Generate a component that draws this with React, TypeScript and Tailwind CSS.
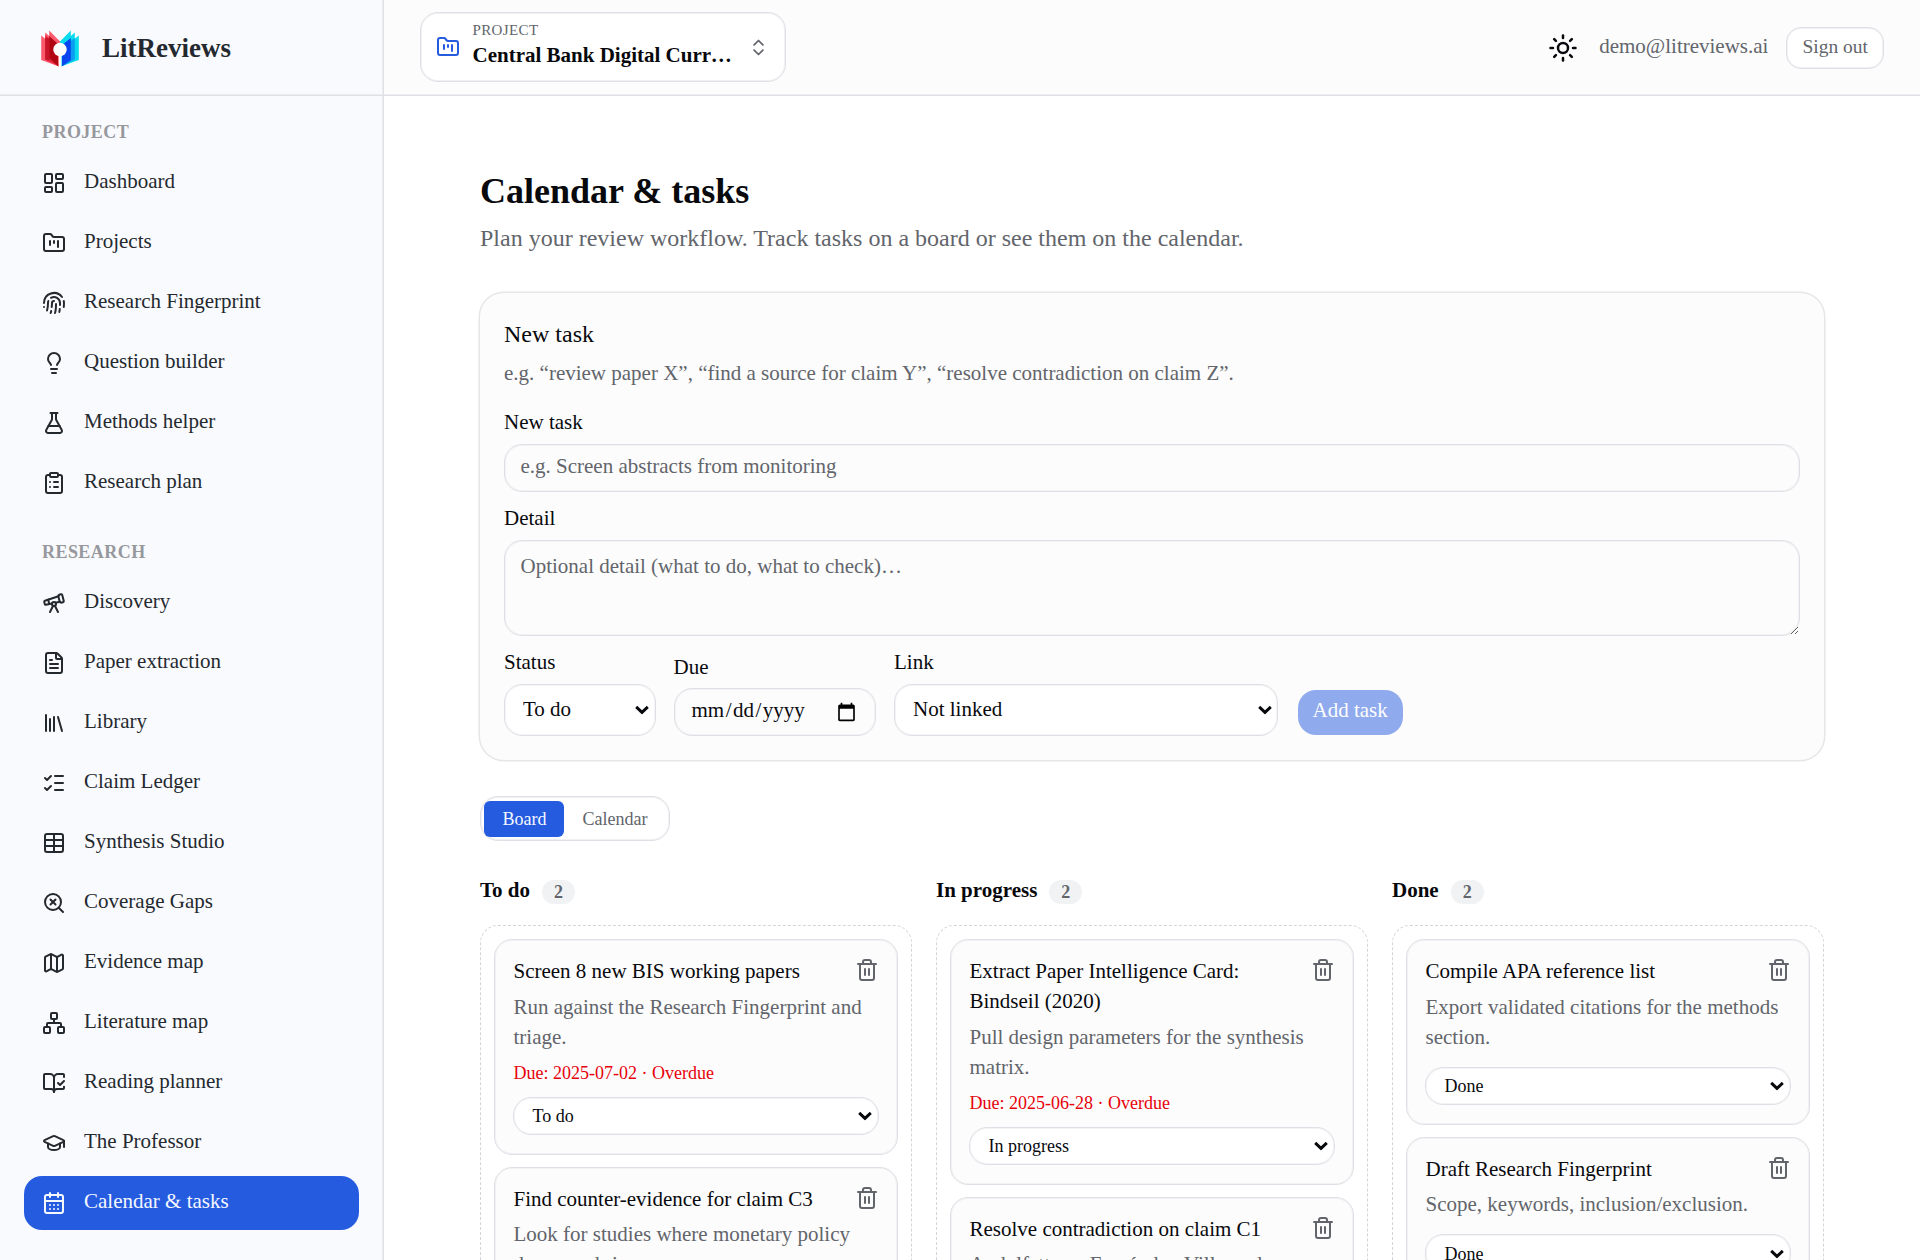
import React from "react";
import {
  LayoutDashboard, FolderKanban, FingerprintPattern, Lightbulb, FlaskConical, ClipboardList, Telescope, FileText,
  Library, ListChecks, SearchX, Map as MapIcon, Network, BookOpenCheck, GraduationCap,
  CalendarDays, ChevronsUpDown, Sun, Trash2, Table,
} from "lucide-react";

type Item = { label: string; icon: React.ElementType; active?: boolean };

const projectNav: Item[] = [
  { label: "Dashboard", icon: LayoutDashboard },
  { label: "Projects", icon: FolderKanban },
  { label: "Research Fingerprint", icon: FingerprintPattern },
  { label: "Question builder", icon: Lightbulb },
  { label: "Methods helper", icon: FlaskConical },
  { label: "Research plan", icon: ClipboardList },
];

const researchNav: Item[] = [
  { label: "Discovery", icon: Telescope },
  { label: "Paper extraction", icon: FileText },
  { label: "Library", icon: Library },
  { label: "Claim Ledger", icon: ListChecks },
  { label: "Synthesis Studio", icon: Table },
  { label: "Coverage Gaps", icon: SearchX },
  { label: "Evidence map", icon: MapIcon },
  { label: "Literature map", icon: Network },
  { label: "Reading planner", icon: BookOpenCheck },
  { label: "The Professor", icon: GraduationCap },
  { label: "Calendar & tasks", icon: CalendarDays, active: true },
];

type Task = { title: string; detail: string; due?: string; status: string };

const columns: { name: string; tasks: Task[] }[] = [
  {
    name: "To do",
    tasks: [
      { title: "Screen 8 new BIS working papers", detail: "Run against the Research Fingerprint and triage.", due: "2025-07-02", status: "To do" },
      { title: "Find counter-evidence for claim C3", detail: "Look for studies where monetary policy dampened rises.", status: "To do" },
    ],
  },
  {
    name: "In progress",
    tasks: [
      { title: "Extract Paper Intelligence Card: Bindseil (2020)", detail: "Pull design parameters for the synthesis matrix.", due: "2025-06-28", status: "In progress" },
      { title: "Resolve contradiction on claim C1", detail: "Andolfatto vs Fernández-Villaverde.", status: "In progress" },
    ],
  },
  {
    name: "Done",
    tasks: [
      { title: "Compile APA reference list", detail: "Export validated citations for the methods section.", status: "Done" },
      { title: "Draft Research Fingerprint", detail: "Scope, keywords, inclusion/exclusion.", status: "Done" },
    ],
  },
];

function Logo() {
  return (
    <svg viewBox="0 0 48 48" className="size-8">
      <path d="M5.200 11.500L9.200 14.800V8.500L13.200 12V6.500L24 17.500V30L23 42.500L5.200 36z" fill="#fb5a6c" />
      <path d="M9.200 11L20 21L23 42.500L9.200 35.500z" fill="#e3263d" />
      <path d="M13.200 12L22 20V42L13.200 34z" fill="#b00713" />
      <path d="M9.200 14V35.500L13.200 37V14z" fill="#c9152a" />
      <path d="M42.800 11.500L38.800 14.800V8.500L34.800 12V6.500L24 17.500V30L25 42.500L42.800 36z" fill="#08dcec" />
      <path d="M38.800 14L28 22L25.500 42.500L38.800 35.500z" fill="#0a9cf0" />
      <path d="M34.800 14L26 21V42.300L34.800 36z" fill="#0a46f0" />
      <path d="M22.700 28h2.800v15h-2.800z" fill="#f9fafd" />
      <circle cx="24" cy="25.500" r="6.700" fill="#fff" />
    </svg>
  );
}

function NavGroup({ title, items }: { title: string; items: Item[] }) {
  return (
    <div className="mb-5">
      <div className="mb-2 px-3 text-xs font-semibold tracking-wide text-[#96989e] uppercase">{title}</div>
      <div className="flex flex-col gap-1">
        {items.map(({ label, icon: Icon, active }) => (
          <a
            key={label}
            className={
              active
                ? "flex items-center gap-3 rounded-xl bg-[#255bdf] px-3 py-2 text-sm text-[#f5f8ff]"
                : "flex items-center gap-3 rounded-xl px-3 py-2 text-sm text-[#24292f]"
            }
          >
            <Icon className="size-4 shrink-0" />
            <span className="-mt-[1.67px] mb-[1.67px]">{label}</span>
          </a>
        ))}
      </div>
    </div>
  );
}

function Select({ value, className, selectClass }: { value: string; className: string; selectClass: string }) {
  return (
    <div className={`relative ${className}`}>
      <select
        className={`block w-full appearance-none rounded-xl border border-[#dfe0e5] bg-white pl-[12px] shadow-[inset_0_0_0_0.67px_#f4f4f6] ${selectClass}`}
      >
        <option>{value}</option>
      </select>
      <svg viewBox="0 0 14 9" className="pointer-events-none absolute top-1/2 right-[4.33px] h-[6px] w-[9.33px] -translate-y-1/2">
        <path d="M1.200 1.400L7 6.900L12.800 1.400" fill="none" stroke="#08090d" strokeWidth="2.900" />
      </svg>
    </div>
  );
}

function TaskCard({ task }: { task: Task }) {
  return (
    <div className="rounded-xl border border-[#dfe0e5] bg-[#fcfcfc] p-[12.33px] pt-3 shadow-[inset_0_0_0_0.67px_#f2f2f4]">
      <div className="flex items-start justify-between gap-2">
        <p className="-mt-[1.33px] mb-[1.33px] text-sm">{task.title}</p>
        <button className="shrink-0 text-[#62656b]">
          <Trash2 className="size-4" />
        </button>
      </div>
      <p className="mt-[2.33px] text-sm text-[#62656b]">{task.detail}</p>
      {task.due && <p className="mt-[6px] text-xs text-[#e7000b]">Due: {task.due} · Overdue</p>}
      <Select value={task.status} className={task.due ? "mt-[8px]" : "mt-[10px]"} selectClass="h-[25.67px] text-xs" />
    </div>
  );
}

export default function App() {
  return (
    <div className="flex h-[840px] w-[1280px] overflow-hidden bg-white font-['Liberation_Serif',serif] text-[#08090d] [zoom:1.5]">
      <aside className="flex w-64 shrink-0 flex-col border-r border-[#dfe0e5] bg-[#f9fafd] shadow-[inset_-0.67px_0_0_#ebecf0]">
        <div className="flex h-16 shrink-0 items-center gap-3 border-b border-[#dfe0e5] px-6 shadow-[inset_0_-0.67px_0_#ebecf0]">
          <Logo />
          <span className="text-lg font-bold text-[#24292f]">LitReviews</span>
        </div>
        <nav className="py-4 pr-[16.33px] pl-4">
          <NavGroup title="Project" items={projectNav} />
          <NavGroup title="Research" items={researchNav} />
        </nav>
      </aside>
      <div className="flex min-w-0 flex-1 flex-col">
        <header className="flex h-16 shrink-0 items-center justify-between border-b border-[#dfe0e5] bg-[#fcfcfc] px-6 shadow-[inset_0_-0.67px_0_#eeeff2]">
          <button className="mb-[0.67px] flex h-[46.67px] items-center gap-2 rounded-xl border border-[#dfe0e5] bg-white px-[10.33px] text-left shadow-[inset_0_0_0_0.67px_#f1f1f4]">
            <FolderKanban className="size-4 shrink-0 text-[#255bdf]" />
            <span className="-mt-[2.67px] flex w-44 flex-col">
              <span className="mt-[0.67px] -mb-[0.67px] text-[10px] leading-[13px] tracking-wide text-[#62656b] uppercase">Project</span>
              <span className="truncate text-sm font-semibold">Central Bank Digital Currency adoption</span>
            </span>
            <ChevronsUpDown className="size-3.5 shrink-0 text-[#62656b]" />
          </button>
          <div className="flex items-center gap-3">
            <Sun className="mr-0.5 size-5" />
            <span className="-mt-px mb-px text-sm text-[#62656b]">demo@litreviews.ai</span>
            <button className="h-7 rounded-[10px] border border-[#dfe0e5] bg-white px-2.5 pb-px text-[13px] text-[#62656b] shadow-[inset_0_0_0_0.67px_#f1f1f4]">
              Sign out
            </button>
          </div>
        </header>
        <main className="flex-1 overflow-hidden px-16 py-12">
          <h1 className="-mt-[0.67px] mb-[0.67px] text-2xl font-bold">Calendar &amp; tasks</h1>
          <p className="mt-[3px] text-base text-[#62656b]">
            Plan your review workflow. Track tasks on a board or see them on the calendar.
          </p>
          <section className="mt-[25.33px] rounded-2xl bg-[#fcfcfc] p-4 ring-1 ring-[#e6e6e7]">
            <h2 className="-mt-px text-base">New task</h2>
            <p className="mt-1 text-sm text-[#62656b]">
              e.g. “review paper X”, “find a source for claim Y”, “resolve contradiction on claim Z”.
            </p>
            <div className="mt-[17.33px] flex flex-col gap-3">
              <div className="flex flex-col gap-1.5">
                <label className="-mt-px mb-px text-sm leading-none">New task</label>
                <input
                  placeholder="e.g. Screen abstracts from monitoring"
                  className="h-8 w-full rounded-xl border border-[#dfe0e5] px-[10.33px] pt-[3px] pb-[5px] text-sm shadow-[inset_0_0_0_0.67px_#f2f2f4] placeholder:text-[#62656b]"
                />
              </div>
              <div className="flex flex-col gap-1.5">
                <label className="-mt-px mb-px text-sm leading-none">Detail</label>
                <textarea
                  placeholder="Optional detail (what to do, what to check)…"
                  className="block h-16 w-full rounded-xl border border-[#dfe0e5] px-[10.33px] pt-[7px] pb-2 text-sm shadow-[inset_0_0_0_0.67px_#f2f2f4] placeholder:text-[#62656b]"
                />
              </div>
              <div className="flex items-end gap-3">
                <div className="flex flex-col gap-1.5">
                  <label className="-mt-px mb-px text-sm leading-none">Status</label>
                  <Select value="To do" className="w-[101px]" selectClass="h-[35px] pb-px text-sm" />
                </div>
                <div className="flex flex-col gap-1.5">
                  <label className="-mt-px mb-px text-sm leading-none">Due</label>
                  <input
                    type="date"
                    className="h-8 w-[135px] rounded-xl border border-[#dfe0e5] px-[10.33px] py-1 text-sm shadow-[inset_0_0_0_0.67px_#f2f2f4] [&::-webkit-datetime-edit]:pb-[3px]"
                  />
                </div>
                <div className="flex flex-col gap-1.5">
                  <label className="-mt-px mb-px text-sm leading-none">Link</label>
                  <Select value="Not linked" className="w-64" selectClass="h-[35px] pb-px text-sm" />
                </div>
                <button className="mb-px ml-px h-[30px] rounded-xl bg-[#255bdf] px-[10px] pb-[3px] text-sm text-white opacity-50">
                  Add task
                </button>
              </div>
            </div>
          </section>
          <div className="mt-6 flex w-fit rounded-xl border border-[#dfe0e5] p-[2.33px] text-xs shadow-[inset_0_0_0_0.67px_#f1f1f4]">
            <button className="rounded-sm bg-[#255bdf] px-3 py-1 text-[#f5f8ff]">Board</button>
            <button className="px-3 py-1 text-[#62656b]">Calendar</button>
          </div>
          <div className="mt-6 grid grid-cols-3 gap-4">
            {columns.map((c) => (
              <div key={c.name}>
                <h2 className="mb-3 flex items-center gap-2 text-sm font-semibold">
                  <span className="-mt-[1.33px] mb-[1.33px]">{c.name}</span>
                  <span className="rounded-full bg-[#f1f2f4] px-2 text-xs text-[#62656b]">{c.tasks.length}</span>
                </h2>
                <div className="flex flex-col gap-2 rounded-xl border border-dashed border-[#d4d5da] p-[8.67px]">
                  {c.tasks.map((t) => (
                    <TaskCard key={t.title} task={t} />
                  ))}
                </div>
              </div>
            ))}
          </div>
        </main>
      </div>
    </div>
  );
}
